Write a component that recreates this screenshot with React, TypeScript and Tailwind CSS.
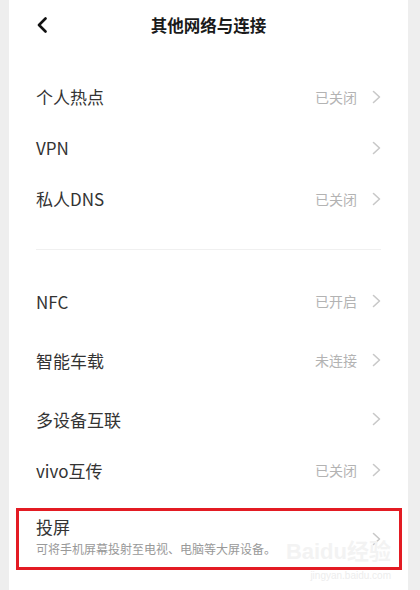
import React from "react";

const font = { fontFamily: '"Noto Sans CJK SC", "Noto Sans", sans-serif' };

const Chevron: React.FC = () => (
  <svg width="9" height="14" viewBox="0 0 9 14" className="shrink-0">
    <polyline points="1.5,1.5 7.5,7 1.5,12.5" fill="none" stroke="#c8c8c8" strokeWidth="1.6" strokeLinecap="round" strokeLinejoin="round" />
  </svg>
);

type RowProps = { label: string; value?: string; h: string };

const Row: React.FC<RowProps> = ({ label, value, h }) => (
  <div className={`flex items-center justify-between ${h}`}>
    <span className="text-[17px] text-[#333333] leading-none">{label}</span>
    <div className="flex items-center gap-[15px]">
      {value && <span className="text-[14px] text-[#b3b3b3] leading-none">{value}</span>}
      <Chevron />
    </div>
  </div>
);

const App: React.FC = () => {
  return (
    <div className="w-[420px] h-[590px] bg-[#eeeeee] overflow-hidden" style={font}>
      <div className="ml-[9px] w-[399px] h-[590px] bg-white">
        {/* Header */}
        <div className="grid grid-cols-[1fr_auto_1fr] items-center h-[50px] px-[27px]">
          <svg width="12" height="16" viewBox="0 0 12 16">
            <polyline points="9.5,1.5 3,8 9.5,14.5" fill="none" stroke="#111111" strokeWidth="2.6" strokeLinecap="round" strokeLinejoin="round" />
          </svg>
          <span className="text-[16.5px] font-bold text-[#1a1a1a]">其他网络与连接</span>
          <span />
        </div>

        {/* Group 1 */}
        <div className="mt-[21px] px-[27px]">
          <Row label="个人热点" value="已关闭" h="h-[51px]" />
          <Row label="VPN" h="h-[51px]" />
          <Row label="私人DNS" value="已关闭" h="h-[51px]" />
        </div>

        <div className="mt-[25px] mx-[27px] h-px bg-[#f0f0f0]" />

        {/* Group 2 */}
        <div className="mt-[22px] px-[27px]">
          <Row label="NFC" value="已开启" h="h-[58px]" />
          <Row label="智能车载" value="未连接" h="h-[60px]" />
          <Row label="多设备互联" h="h-[58px]" />
          <Row label="vivo互传" value="已关闭" h="h-[44px]" />
        </div>

        {/* Highlighted row */}
        <div className="relative mt-[16px] ml-[7px] mr-[6px] h-[62px] border-[3px] border-[#e31b23] flex items-center justify-between pl-[17px] pr-[18px]">
          <div className="flex flex-col self-start pt-[5px]">
            <span className="text-[17px] text-[#333333] leading-[22px]">投屏</span>
            <span className="mt-[3px] text-[12px] text-[#999999] leading-[16px]">可将手机屏幕投射至电视、电脑等大屏设备。</span>
          </div>
          <Chevron />
          {/* watermark */}
          <div className="absolute right-[8px] top-[30px] flex flex-col items-end pointer-events-none">
            <span className="text-[22px] font-bold leading-none text-[#f3f3f3]" style={{ fontFamily: '"Liberation Sans", "Noto Sans CJK SC", sans-serif' }}>
              Baidu经验
            </span>
            <span className="mt-[8px] text-[10px] leading-none text-[#ededed]" style={{ fontFamily: '"Liberation Sans", sans-serif' }}>
              jingyan.baidu.com
            </span>
          </div>
        </div>
      </div>
    </div>
  );
};

export default App;
